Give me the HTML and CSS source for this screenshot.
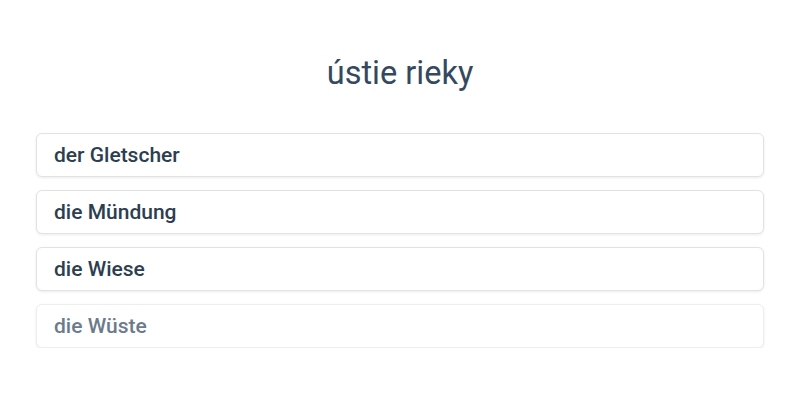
FILE: index.html
```html
<!DOCTYPE html>
<html lang="sk">
<head>
    <meta charset="UTF-8">
    <meta name="viewport" content="width=device-width, initial-scale=1.0">
    <title>Quiz</title>
    <link rel="stylesheet" href="styles.css">
</head>
<body>

<div class="quiz">
    <h2 class="question">ústie rieky</h2>
    <div class="answers">
        <button class="answer">der Gletscher</button>
        <button class="answer">die Mündung</button>
        <button class="answer">die Wiese</button>
        <button class="answer faded">die Wüste</button>
    </div>
</div>

</body>
</html>
```

FILE: styles.css
```css
body {
    font-family: Roboto, 'Liberation Sans', sans-serif;
    margin: 0;
    background: #fff;
    color: #2c3e50;
}
.quiz {
    padding: 51px 36px 0;
}
.question {
    margin: 0 0 38px;
    text-align: center;
    font-size: 32.5px;
    font-weight: 400;
    line-height: 44px;
    color: #34495e;
}
.answers {
    display: flex;
    flex-direction: column;
    gap: 13px;
}
.answer {
    height: 44px;
    padding: 0 17px;
    text-align: left;
    font-family: inherit;
    font-size: 21px;
    font-weight: 500;
    color: #2c3e50;
    background: #fff;
    border: 1px solid #e2e2e2;
    border-radius: 6px;
    box-shadow: 0 1px 3px rgba(0, 0, 0, 0.08);
    cursor: pointer;
}
.answer.faded {
    color: #6b7b8c;
    border-color: #eeeeee;
}
```
